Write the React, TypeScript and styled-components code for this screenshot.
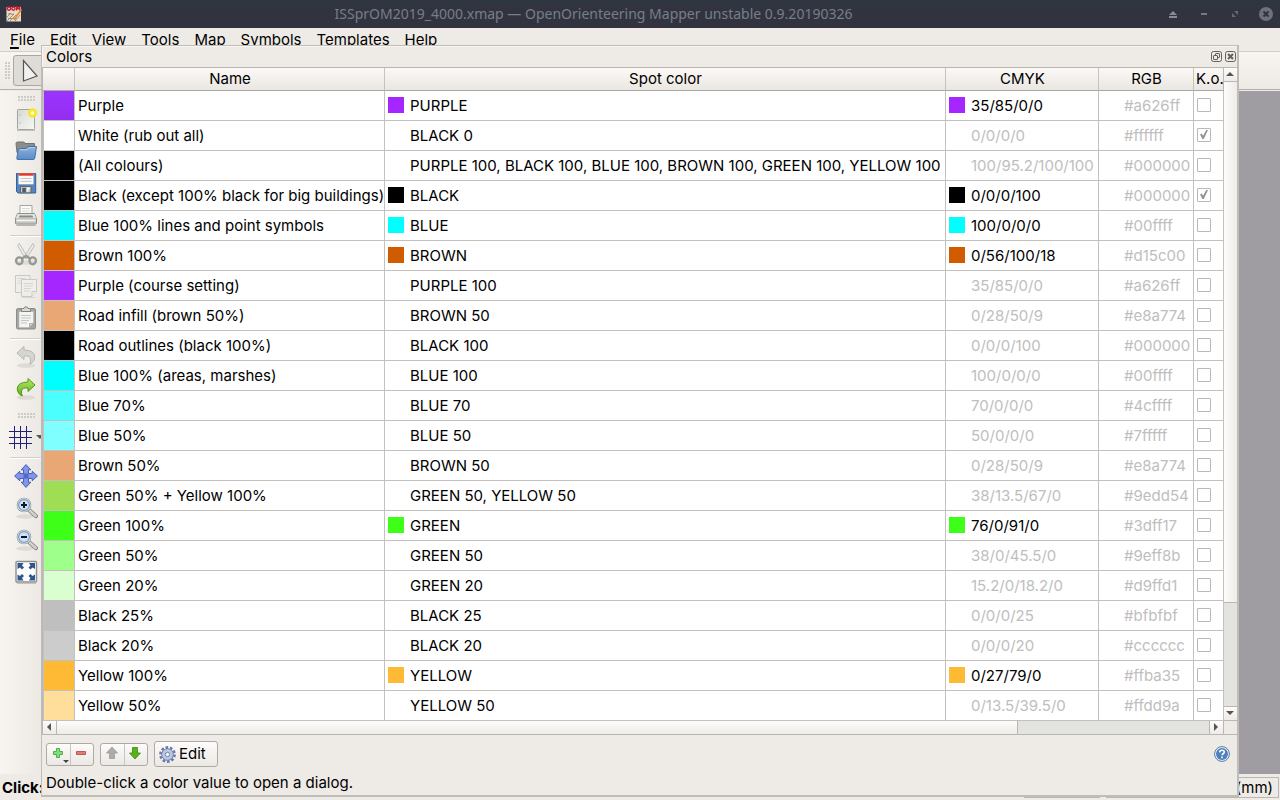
import React from 'react';
import styled, { createGlobalStyle, css } from 'styled-components';

const GlobalStyle = createGlobalStyle`
  * { box-sizing: border-box; }
  body {
    margin: 0;
    font-family: Inter, "Noto Sans", sans-serif;
    font-size: 15px;
    line-height: 20px;
    color: #000;
    background: #efebe7;
  }
  button { font: inherit; color: inherit; border: 0; padding: 0; background: none; }
  svg { display: block; flex: none; }
`;

const line = '#bab6b2';

const Window = styled.div`
  position: relative;
  display: flex;
  flex-direction: column;
  height: 100vh;
  min-height: 400px;
  overflow: hidden;
  background: #eeebe6;
`;

const TitleBar = styled.header`
  display: flex;
  align-items: center;
  flex: none;
  height: 28px;
  padding: 0 6px;
  background: linear-gradient(#2d3641, #31343f 8px);
  color: #777e8a;
  font-family: "Noto Sans", sans-serif;
`;

const WindowTitle = styled.h1`
  flex: 1;
  margin: 0;
  font-size: 14px;
  font-weight: 400;
  line-height: 28px;
  text-align: center;
  white-space: nowrap;
`;

const WindowControls = styled.div`
  display: flex;
  align-items: center;
  gap: 15px;
`;

const WindowButton = styled.button`
  display: grid;
  place-items: center;
  width: 16px;
  height: 16px;
`;

const MenuBar = styled.nav`
  display: flex;
  flex: none;
  gap: 15px;
  height: 24px;
  padding: 2px 10px 0;
  border-bottom: 1px solid #d2cec9;
`;

const MenuItem = styled.button`
  height: 20px;
  white-space: nowrap;
`;

const Mnemonic = styled.span`
  text-decoration: underline 2px;
  text-underline-offset: 2px;
`;

const TopToolbar = styled.div`
  display: flex;
  align-items: center;
  gap: 3px;
  flex: none;
  height: 38px;
  padding: 0 5px;
  border-bottom: 1px solid #b5b0ac;
  background: linear-gradient(#f8f5f1, #edeae5);
`;

const Handle = styled.span<{ $vertical?: boolean }>`
  flex: none;
  width: ${(p) => (p.$vertical ? 5 : 17)}px;
  height: ${(p) => (p.$vertical ? 17 : 5)}px;
  background: radial-gradient(circle at 1px 1px, #cfcbc7 30%, transparent 40%) 0 0 / 3px 3px;
`;

const ToolPressed = styled.button`
  display: grid;
  place-items: center;
  width: 34px;
  height: 31px;
  border: 1px solid #aaa6a2;
  border-radius: 3px;
  background: #dfdbd7;
`;

const Workspace = styled.div`
  display: flex;
  flex: 1;
  min-height: 0;
  padding-top: 1px;
`;

const SideToolbar = styled.div`
  display: flex;
  flex-direction: column;
  flex: none;
  width: 52px;
  padding: 5px 0 0 10px;
  background: linear-gradient(90deg, #f8f5f1, #ece9e4 42px);
`;

const SideHandle = styled.div`
  display: flex;
  justify-content: center;
  flex: none;
  width: 32px;
  height: 7px;
`;

const HandleGap = styled(SideHandle)`
  align-items: center;
  height: 16px;
  padding-top: 5px;
`;

const ToolButton = styled.button`
  display: grid;
  place-items: center;
  flex: none;
  width: 32px;
  height: 32px;
`;

const MenuToolButton = styled.button`
  display: flex;
  align-items: center;
  gap: 4px;
  flex: none;
  width: 42px;
  height: 32px;
  margin-left: -2px;
`;

const ToolSeparator = styled.div`
  flex: none;
  height: 7px;
  border-top: 4px solid transparent;
  &::after { content: ""; display: block; height: 2px; background: linear-gradient(#d2cec9 1px, #fff 1px); }
`;

const MapArea = styled.main`
  flex: 1;
  background: #9f9da2;
`;

const StatusBar = styled.footer`
  display: flex;
  flex: none;
  align-items: center;
  gap: 6px;
  height: 26px;
  padding: 2px 1px 1px 2px;
`;

const StatusHint = styled.strong`
  flex: 1;
  font-weight: 700;
`;

const StatusCell = styled.div<{ $width: number }>`
  width: ${(p) => p.$width}px;
  height: 21px;
  padding-right: 5px;
  border: 1px solid #bab6b2;
  text-align: right;
`;

/* The color list floats over the main window. */
const Dock = styled.section`
  position: absolute;
  inset: 45px 41px 3px 41px;
  display: flex;
  flex-direction: column;
  border: solid #c0bcb7;
  border-width: 1px 2px 2px 1px;
  background: #eeebe6;
`;

const DockTitle = styled.div`
  display: flex;
  align-items: center;
  gap: 3px;
  flex: none;
  height: 21px;
  padding: 0 1px 0 4px;
  box-shadow: inset 1px 1px #f9f7f5;
`;

const DockName = styled.h2`
  flex: 1;
  margin: 0;
  font-size: 15px;
  font-weight: 400;
`;

const Frame = styled.div`
  display: grid;
  grid-template-columns: minmax(0, 1fr) 13px;
  grid-template-rows: minmax(0, 1fr) 13px;
  flex: 1;
  min-height: 0;
  border: solid ${line};
  border-width: 1px 0 1px 1px;
`;

const Viewport = styled.div`
  overflow: hidden;
  background: #fff;
`;

const Table = styled.table`
  width: 100%;
  border-collapse: separate;
  border-spacing: 0;
  table-layout: fixed;
`;

const Col = styled.col<{ $width?: number }>`
  width: ${(p) => (p.$width ? `${p.$width}px` : 'auto')};
`;

const HeadCell = styled.th`
  height: 23px;
  padding: 0 1px 0 2px;
  overflow: hidden;
  border-right: 1px solid #c6c2be;
  border-bottom: 1px solid #aaa6a2;
  background: linear-gradient(#fbf8f5, #eae7e3);
  font-weight: 400;
  white-space: nowrap;
  &:last-child { border-right-color: ${line}; }
`;

const Cell = styled.td<{ $dim?: boolean }>`
  height: 30px;
  padding: 0 0 0 3px;
  border-right: 1px solid #c3c0bd;
  border-bottom: 1px solid #c3c0bd;
  color: ${(p) => (p.$dim ? '#bebebe' : '#000')};
  white-space: nowrap;
`;

const ColorCell = styled(Cell)<{ $color: string; $current?: boolean }>`
  border-left: 1px solid #c3c0bd;
  background: ${(p) => (p.$current ? 'linear-gradient(#9c34ff, #932ef0)' : p.$color)};
`;

const Value = styled.span`
  display: flex;
  align-items: center;
  gap: 6px;
`;

const Swatch = styled.span<{ $color?: string }>`
  flex: none;
  width: 16px;
  height: 16px;
  margin-bottom: 1px;
  background: ${(p) => p.$color ?? 'transparent'};
`;

const Check = styled.input`
  display: block;
  appearance: none;
  width: 14px;
  height: 14px;
  margin: 0 0 1px;
  border: 1px solid #bbb7b2;
  border-radius: 1px;
  background: #fff;
  &:checked::before {
    content: "";
    display: block;
    width: 8px;
    height: 9px;
    margin: 1px 2px;
    background: #969492;
    clip-path: polygon(0 50%, 22% 40%, 38% 65%, 78% 0, 100% 0, 48% 100%, 30% 100%);
  }
`;

const scrollPart = css`
  border: 0 solid ${line};
  background: linear-gradient(#fdfcfb, #eeebe8);
`;

const VScroll = styled.div`
  display: flex;
  flex-direction: column;
  border-bottom: 1px solid ${line};
  background: #e3e3df;
`;

const HScroll = styled.div`
  display: flex;
  border-right: 1px solid ${line};
  background: #e3e3df;
`;

const ScrollArrow = styled.button<{ $edge: string }>`
  ${scrollPart}
  display: grid;
  place-items: center;
  flex: none;
  width: ${(p) => (p.$edge === 'left' || p.$edge === 'right' ? 14 : 13)}px;
  height: ${(p) => (p.$edge === 'left' || p.$edge === 'right' ? 13 : 14)}px;
  padding: 0 2px 1px 0;
  border-${(p) => p.$edge}-width: 1px;
`;

const VThumb = styled.div`
  ${scrollPart}
  height: 521px;
  border-bottom-width: 1px;
  background: linear-gradient(90deg, #fdfcfb, #eeebe8);
`;

const HThumb = styled.div`
  ${scrollPart}
  width: 961px;
  border-right-width: 1px;
`;

const Fill = styled.div`
  flex: 1 1 0;
`;

const Corner = styled.div`
  background: #eeebe6;
`;

const Footer = styled.div`
  flex: none;
  padding: 6px 7px 2px 4px;
`;

const Actions = styled.div`
  display: flex;
  align-items: center;
  gap: 6px;
  height: 26px;
`;

const Group = styled.div`
  display: flex;
  height: 23px;
  border: 1px solid #aeaaa6;
  border-radius: 3px;
  background: linear-gradient(#fdfcfb, #ebe8e4);
`;

const GroupButton = styled.button<{ $disabled?: boolean }>`
  position: relative;
  display: grid;
  place-items: center;
  width: 23px;
  height: 21px;
  padding: 0 2px 2px 0;
  opacity: ${(p) => (p.$disabled ? 0.9 : 1)};
  & + & { border-left: 1px solid #c9c5c1; }
`;

const MenuArrow = styled.svg`
  position: absolute;
  right: 1px;
  bottom: 2px;
`;

const EditButton = styled.button`
  display: flex;
  align-items: center;
  gap: 3px;
  width: 64px;
  height: 26px;
  padding: 0 4px;
  border: 1px solid #aeaaa6;
  border-radius: 3px;
  background: linear-gradient(#fdfcfb, #ebe8e4);
`;

const HelpButton = styled.button`
  margin-left: auto;
`;

const Hint = styled.p`
  margin: 6px 0 0;
`;

/* name, spot color, CMYK, RGB, knockout, own spot color */
type Row = [string, string, string, string, boolean?, boolean?];

const rows: Row[] = [
  ['Purple', 'PURPLE', '35/85/0/0', '#a626ff', false, true],
  ['White (rub out all)', 'BLACK 0', '0/0/0/0', '#ffffff', true],
  ['(All colours)', 'PURPLE 100, BLACK 100, BLUE 100, BROWN 100, GREEN 100, YELLOW 100', '100/95.2/100/100', '#000000'],
  ['Black (except 100% black for big buildings)', 'BLACK', '0/0/0/100', '#000000', true, true],
  ['Blue 100% lines and point symbols', 'BLUE', '100/0/0/0', '#00ffff', false, true],
  ['Brown 100%', 'BROWN', '0/56/100/18', '#d15c00', false, true],
  ['Purple (course setting)', 'PURPLE 100', '35/85/0/0', '#a626ff'],
  ['Road infill (brown 50%)', 'BROWN 50', '0/28/50/9', '#e8a774'],
  ['Road outlines (black 100%)', 'BLACK 100', '0/0/0/100', '#000000'],
  ['Blue 100% (areas, marshes)', 'BLUE 100', '100/0/0/0', '#00ffff'],
  ['Blue 70%', 'BLUE 70', '70/0/0/0', '#4cffff'],
  ['Blue 50%', 'BLUE 50', '50/0/0/0', '#7fffff'],
  ['Brown 50%', 'BROWN 50', '0/28/50/9', '#e8a774'],
  ['Green 50% + Yellow 100%', 'GREEN 50, YELLOW 50', '38/13.5/67/0', '#9edd54'],
  ['Green 100%', 'GREEN', '76/0/91/0', '#3dff17', false, true],
  ['Green 50%', 'GREEN 50', '38/0/45.5/0', '#9eff8b'],
  ['Green 20%', 'GREEN 20', '15.2/0/18.2/0', '#d9ffd1'],
  ['Black 25%', 'BLACK 25', '0/0/0/25', '#bfbfbf'],
  ['Black 20%', 'BLACK 20', '0/0/0/20', '#cccccc'],
  ['Yellow 100%', 'YELLOW', '0/27/79/0', '#ffba35', false, true],
  ['Yellow 50%', 'YELLOW 50', '0/13.5/39.5/0', '#ffdd9a'],
];

const AppIcon = () => (
  <svg width="16" height="16" viewBox="0 0 16 16">
    <rect x="0.5" y="1" width="14.5" height="14.5" fill="#e9dccb" />
    <path d="M1 15L8 8M4 15L10 9M1 11L5 7M9 15l5-6" stroke="#b08a7a" strokeWidth="1" />
    <path d="M2 8c3-1 4 1 6 0M2 13c3-2 4 1 7-1" stroke="#7c8a72" fill="none" />
    <g fill="none" stroke="#c81c38" strokeWidth="1.4">
      <circle cx="3" cy="2.6" r="1.6" /><circle cx="7.4" cy="2.6" r="1.6" />
      <path d="M10.6 4.6V.8l1.5 2 1.6-2v3.8" />
    </g>
    <path d="M15.5 3.5L10.5 10l-1.8 4" stroke="#e98a1d" strokeWidth="1.7" fill="none" />
  </svg>
);

const NewIcon = () => (
  <svg width="24" height="24" viewBox="0 0 24 24">
    <defs>
      <linearGradient id="paper" x2="1" y2="1"><stop stopColor="#d8d8d5" /><stop offset="1" stopColor="#f8f8f7" /></linearGradient>
      <radialGradient id="glow"><stop offset=".2" stopColor="#fffde0" /><stop offset=".4" stopColor="#f6ec2d" /><stop offset=".75" stopColor="#f2e81c" stopOpacity=".9" /><stop offset="1" stopColor="#f4f080" stopOpacity="0" /></radialGradient>
    </defs>
    <rect x="3.5" y="2.500" width="17" height="20" rx=".8" fill="url(#paper)" stroke="#a3a39f" />
    <path d="M3 23.300h18" stroke="#b8b6b1" />
    <path d="M5.500 8h1M5.500 16h1" stroke="#999" />
    <circle cx="18.500" cy="6" r="5.500" fill="url(#glow)" />
  </svg>
);

const OpenIcon = () => (
  <svg width="24" height="24" viewBox="0 0 24 24">
    <defs><linearGradient id="folder" x2="0" y2="1"><stop stopColor="#8eb2dc" /><stop offset="1" stopColor="#5a8bc6" /></linearGradient></defs>
    <path d="M2 4.500q0-1.500 1.500-1.500h6q1.200 0 1.600 1.500h9.400v9H3z" fill="#8b8d8b" stroke="#70726f" />
    <path d="M5 9.500h13" stroke="#dedede" />
    <path d="M5.500 9.500h7l1.500-2h8.500L20.800 19q-.2 1.500-1.500 1.500H3.800q-1.200 0-1-1.200L4.200 11q.2-1.500 1.300-1.500z" fill="url(#folder)" stroke="#4272ad" />
    <path d="M6 10.700h7.200l1.500-2h6.400" stroke="#b9d2ee" fill="none" />
  </svg>
);

const SaveIcon = () => (
  <svg width="24" height="24" viewBox="0 0 24 24">
    <path d="M2.500 2.500h19.200v19.500H4L2.500 20.500z" fill="#5585bf" stroke="#33619b" />
    <path d="M4.500 2.500h15v10.800h-15z" fill="#fafafa" />
    <path d="M4.500 2.200h15v2.500h-15z" fill="#e4372b" />
    <path d="M6.500 7.500h11M6.500 10.300h11" stroke="#c2c2c2" />
    <path d="M6.500 15.500h10.500v6.300H6.500z" fill="#c9cac8" stroke="#555853" strokeWidth=".8" />
    <path d="M8.300 16.800h3.600v4.500H8.300z" fill="#4d5a68" />
    <path d="M13 21.500v-5h3.500z" fill="#f4f4f2" />
  </svg>
);

const PrintIcon = () => (
  <svg width="24" height="24" viewBox="0 0 24 24">
    <path d="M6 2.500h12v9.500H6z" fill="#fafafa" stroke="#a3a5a1" />
    <path d="M8 5.500h8M8 8h8M8 10.300h8" stroke="#dadad6" />
    <path d="M3.500 10.500h17l2 5v4.800q0 .8-.8.8H2.300q-.8 0-.8-.8v-4.800z" fill="#c4c4c0" stroke="#8e908b" />
    <path d="M3.500 11h17l1.500 4H2z" fill="#e3e3df" />
    <path d="M5.500 12.500h13l.7 2H4.800z" fill="#898c86" />
    <path d="M2.500 17.500h19" stroke="#f7f7f5" strokeWidth="1.500" />
    <path d="M2.500 22.500h19" stroke="#b6b4b0" />
  </svg>
);

const CutIcon = () => (
  <svg width="24" height="24" viewBox="0 0 24 24">
    <ellipse cx="12" cy="20.500" rx="10" ry="2.300" fill="#dfdbd6" />
    <path d="M5.200 1.500l8.500 13.700-2.200 1.300L4 4.500q-.5-2 1.200-3z" fill="#ededeb" stroke="#aeafac" strokeWidth=".8" />
    <path d="M18.800 1.500l-8.500 13.700 2.200 1.300L20 4.500q.5-2-1.200-3z" fill="#ededeb" stroke="#aeafac" strokeWidth=".8" />
    <g fill="none" stroke="#979894" strokeWidth="2.400">
      <ellipse cx="5.300" cy="18.800" rx="3.200" ry="3.400" />
      <ellipse cx="18.700" cy="18.800" rx="3.200" ry="3.400" />
      <path d="M8 16.500l4-2.500 4 2.500" />
    </g>
  </svg>
);

const CopyIcon = () => (
  <svg width="24" height="24" viewBox="0 0 24 24">
    <g fill="#f0eeeb" stroke="#c8c8c4">
      <path d="M1.500 1.500h14.500v17H1.500z" />
      <path d="M7.500 5.500h15v12l-4.500 5H7.500z" />
      <path d="M22.500 17.500h-4.500v5" />
    </g>
    <path d="M3.500 4.500h8M3.500 7h3M3.500 9.500h3M10 9.500h9M10 12h9M10 14.500h7M10 17h6" stroke="#d6d5d1" />
    <path d="M8 23.500h14" stroke="#dbd8d4" />
  </svg>
);

const PasteIcon = () => (
  <svg width="24" height="24" viewBox="0 0 24 24">
    <rect x="2.500" y="2.500" width="19" height="20.500" rx="1.500" fill="#a4a5a1" stroke="#8c8d89" />
    <path d="M5 5.500h14.500v12l-4 4H5z" fill="#f4f4f2" stroke="#b7b8b4" strokeWidth=".6" />
    <path d="M7 9.500h10M7 12h10M7 14.500h8M7 17h6" stroke="#c5c5c1" />
    <path d="M19.500 17.500h-4v4z" fill="#d2d2ce" stroke="#9c9d99" strokeWidth=".7" />
    <path d="M7.500 5.500v-2q0-1 1-1H10q0-1.700 2-1.700t2 1.700h1.500q1 0 1 1v2z" fill="#d9d9d5" stroke="#80827d" />
  </svg>
);

const UndoIcon = ({ redo }: { redo?: boolean }) => (
  <svg width="24" height="24" viewBox="0 0 24 24">
    <defs><linearGradient id="redo" x2="0" y2="1"><stop stopColor="#b8ea6c" /><stop offset="1" stopColor="#5dac17" /></linearGradient></defs>
    <ellipse cx="12" cy="20.500" rx="9" ry="2.300" fill="#dedad5" />
    {redo ? (
      <path d="M14 1.500l7 6.500-7 6.500v-3.500q-5.500-.8-6.500 3-.4 2 .8 5-5-2-5-7.600Q3.600 5.300 14 5z" fill="url(#redo)" stroke="#4e9a15" strokeLinejoin="round" />
    ) : (
      <path d="M10 1.500L3 8l7 6.500v-3.500q5.500-.8 6.500 3 .4 2-.8 5 5-2 5-7.600Q20.400 5.300 10 5z" fill="#d5d5d1" stroke="#b6b7b2" strokeLinejoin="round" />
    )}
  </svg>
);

const GridIcon = () => (
  <svg width="24" height="24" viewBox="0 0 24 24">
    <path d="M1 6.500h23M1 12.500h23M1 18.500h23M6.500 1v23M12.500 1v23M18.500 1v23" stroke="#20207a" />
  </svg>
);

const MoveIcon = () => (
  <svg width="24" height="24" viewBox="0 0 24 24">
    <path d="M12 .6l4.800 5.200h-2.300v3.700h3.700V7.200L23.400 12l-5.200 4.800v-2.300h-3.700v3.700h2.300L12 23.400l-4.800-5.200h2.300v-3.700H5.800v2.300L.6 12l5.200-4.800v2.300h3.700V5.800H7.200z" fill="#8095ee" stroke="#42549f" strokeWidth=".9" strokeLinejoin="round" />
    <rect x="9.500" y="9.500" width="5" height="5" fill="#5068c9" />
  </svg>
);

const ZoomIcon = ({ plus }: { plus?: boolean }) => (
  <svg width="24" height="24" viewBox="0 0 24 24">
    <ellipse cx="11" cy="20.500" rx="9" ry="2.200" fill="#dedad5" />
    <path d="M15 14l6.800 6" stroke="#7f817d" strokeWidth="4.200" strokeLinecap="round" />
    <path d="M15 14l6.800 6" stroke="#d3d4d1" strokeWidth="2.400" strokeLinecap="round" />
    <circle cx="10" cy="9" r="7.300" fill="#8b8d89" />
    <circle cx="10" cy="9" r="6.700" fill="#e7e9e8" />
    <circle cx="10" cy="9" r="5.400" fill="#cfe0f4" stroke="#6f99cc" strokeWidth="1.200" />
    <path d={plus ? 'M7 9h6M10 6v6' : 'M7 9h6'} stroke="#101820" strokeWidth="2" />
  </svg>
);

const FitIcon = () => (
  <svg width="24" height="24" viewBox="0 0 24 24">
    <rect x="2" y="1.500" width="20.500" height="20.500" rx="1" fill="#fcfcfb" stroke="#8d8f8b" strokeWidth="1.400" />
    <path d="M3.500 3h6L8 5.500l2 2-2 2-2-2L3.500 9zM21 3h-6l1.500 2.500-2 2 2 2 2-2L21 9zM3.500 20.500h6L8 18l2-2-2-2-2 2-2.500-1.500zM21 20.500h-6l1.500-2.500-2-2 2-2 2 2 2.500-1.500z" fill="#2d5592" />
    <path d="M3 23.300h19" stroke="#bbb8b4" />
  </svg>
);

const Triangle = ({ dir }: { dir: 'up' | 'down' | 'left' | 'right' }) => {
  const d = { up: 'M0 6l4-4 4 4z', down: 'M0 2l4 4 4-4z', left: 'M6 0L2 4l4 4z', right: 'M2 0l4 4-4 4z' }[dir];
  return <svg width="8" height="8" viewBox="0 0 8 8"><path d={d} fill="#575552" /></svg>;
};

const GearIcon = () => (
  <svg width="17" height="17" viewBox="0 0 17 17">
    <circle cx="8.500" cy="8.500" r="7" fill="none" stroke="#6a7cab" strokeWidth="2.800" strokeDasharray="2.600 1.800" />
    <circle cx="8.500" cy="8.500" r="5.800" fill="#bcc7e2" stroke="#7182b0" />
    <circle cx="8.500" cy="8.500" r="2.200" fill="#f4f3f1" stroke="#7182b0" />
  </svg>
);

const HelpIcon = () => (
  <svg width="16" height="16" viewBox="0 0 16 16">
    <circle cx="8" cy="8" r="7.400" fill="#f2f5f9" stroke="#4f78ad" />
    <circle cx="8" cy="8" r="6" fill="#4e80bd" />
    <path d="M5.700 6.400q.1-2.100 2.300-2.100t2.300 1.800q0 1-1.200 1.700-1 .6-1 1.500M8 10.600v1.700" fill="none" stroke="#fff" strokeWidth="1.600" />
  </svg>
);

const FloatIcon = () => (
  <svg width="11" height="11" viewBox="0 0 11 11" fill="none" stroke="#62605d">
    <rect x=".5" y=".5" width="10" height="10" rx="2" />
    <rect x="4.500" y="2.500" width="4" height="4" rx=".5" /><rect x="2.500" y="4.500" width="4" height="4" rx=".5" fill="#eeebe6" />
  </svg>
);

const CloseIcon = () => (
  <svg width="11" height="11" viewBox="0 0 11 11" fill="none" stroke="#62605d">
    <rect x=".5" y=".5" width="10" height="10" rx="2" />
    <path d="M3 3l5 5M8 3L3 8" strokeWidth="2" />
  </svg>
);

const menus = ['Edit', 'View', 'Tools', 'Map', 'Symbols', 'Templates', 'Help'];

export default function App() {
  return (
    <Window>
      <GlobalStyle />
      <TitleBar>
        <AppIcon />
        <WindowTitle>ISSprOM2019_4000.xmap — OpenOrienteering Mapper unstable 0.9.20190326</WindowTitle>
        <WindowControls>
          <WindowButton aria-label="Shade">
            <svg width="8" height="8" viewBox="0 0 8 8" fill="#858b96"><path d="M0 5l4-4 4 4zM0 6h8v2H0z" /></svg>
          </WindowButton>
          <WindowButton aria-label="Minimize">
            <svg width="6" height="6" viewBox="0 0 6 6" fill="#747a86"><path d="M0 2h6v2H0z" /></svg>
          </WindowButton>
          <WindowButton aria-label="Maximize">
            <svg width="6" height="6" viewBox="0 0 6 6" fill="#646a76"><path d="M2 0h4v4zM0 2l4 4H0z" /></svg>
          </WindowButton>
          <WindowButton aria-label="Close window">
            <svg width="14" height="14" viewBox="0 0 14 14"><circle cx="7" cy="7" r="7" fill="#6b717d" /><path d="M4.500 4.500l5 5M9.500 4.500l-5 5" stroke="#31343f" strokeWidth="2" /></svg>
          </WindowButton>
        </WindowControls>
      </TitleBar>
      <MenuBar>
        <MenuItem><Mnemonic>F</Mnemonic>ile</MenuItem>
        {menus.map((m) => <MenuItem key={m}>{m}</MenuItem>)}
      </MenuBar>
      <TopToolbar>
        <Handle $vertical />
        <ToolPressed aria-label="Edit objects">
          <svg width="20" height="24" viewBox="0 0 20 24"><path d="M3.500 1.500v20.500L17 17z" fill="#f2f1ef" stroke="#555" strokeWidth="1.200" /></svg>
        </ToolPressed>
      </TopToolbar>
      <Workspace>
        <SideToolbar>
          <SideHandle><Handle /></SideHandle>
          <ToolButton aria-label="New"><NewIcon /></ToolButton>
          <ToolButton aria-label="Open"><OpenIcon /></ToolButton>
          <ToolButton aria-label="Save"><SaveIcon /></ToolButton>
          <ToolButton aria-label="Print"><PrintIcon /></ToolButton>
          <ToolSeparator />
          <ToolButton aria-label="Cut"><CutIcon /></ToolButton>
          <ToolButton aria-label="Copy"><CopyIcon /></ToolButton>
          <ToolButton aria-label="Paste"><PasteIcon /></ToolButton>
          <ToolSeparator />
          <ToolButton aria-label="Undo"><UndoIcon /></ToolButton>
          <ToolButton aria-label="Redo"><UndoIcon redo /></ToolButton>
          <HandleGap><Handle /></HandleGap>
          <MenuToolButton aria-label="Show grid"><GridIcon /><Triangle dir="down" /></MenuToolButton>
          <ToolSeparator />
          <ToolButton aria-label="Pan"><MoveIcon /></ToolButton>
          <ToolButton aria-label="Zoom in"><ZoomIcon plus /></ToolButton>
          <ToolButton aria-label="Zoom out"><ZoomIcon /></ToolButton>
          <ToolButton aria-label="Show whole map"><FitIcon /></ToolButton>
        </SideToolbar>
        <MapArea />
      </Workspace>
      <StatusBar>
        <StatusHint>Click:</StatusHint>
        <StatusCell $width={76} />
        <StatusCell $width={173}>(mm)</StatusCell>
      </StatusBar>

      <Dock>
        <DockTitle>
          <DockName>Colors</DockName>
          <button aria-label="Float"><FloatIcon /></button>
          <button aria-label="Close"><CloseIcon /></button>
        </DockTitle>
        <Frame>
          <Viewport>
            <Table>
              <colgroup>
                <Col $width={32} /><Col $width={310} /><Col /><Col $width={153} /><Col $width={95} /><Col $width={30} />
              </colgroup>
              <thead>
                <tr>
                  <HeadCell aria-label="Color" />
                  <HeadCell>Name</HeadCell>
                  <HeadCell>Spot color</HeadCell>
                  <HeadCell>CMYK</HeadCell>
                  <HeadCell>RGB</HeadCell>
                  <HeadCell>K.o.</HeadCell>
                </tr>
              </thead>
              <tbody>
                {rows.map(([name, spot, cmyk, rgb, knockout, own], i) => (
                  <tr key={name}>
                    <ColorCell $color={rgb} $current={i === 0} />
                    <Cell>{name}</Cell>
                    <Cell><Value><Swatch $color={own ? rgb : undefined} />{spot}</Value></Cell>
                    <Cell $dim={!own}><Value><Swatch $color={own ? rgb : undefined} />{cmyk}</Value></Cell>
                    <Cell $dim><Value><Swatch />{rgb}</Value></Cell>
                    <Cell><Check type="checkbox" aria-label={`Knockout: ${name}`} defaultChecked={knockout} /></Cell>
                  </tr>
                ))}
              </tbody>
            </Table>
          </Viewport>
          <VScroll>
            <ScrollArrow $edge="bottom" aria-label="Scroll up"><Triangle dir="up" /></ScrollArrow>
            <VThumb />
            <Fill />
            <ScrollArrow $edge="top" aria-label="Scroll down"><Triangle dir="down" /></ScrollArrow>
          </VScroll>
          <HScroll>
            <ScrollArrow $edge="right" aria-label="Scroll left"><Triangle dir="left" /></ScrollArrow>
            <HThumb />
            <Fill />
            <ScrollArrow $edge="left" aria-label="Scroll right"><Triangle dir="right" /></ScrollArrow>
          </HScroll>
          <Corner />
        </Frame>
        <Footer>
          <Actions>
            <Group>
              <GroupButton aria-label="Add color">
                <svg width="12" height="12" viewBox="0 0 12 12"><path d="M4.500 1.500h3v3h3v3h-3v3h-3v-3h-3v-3h3z" fill="#84dc7e" stroke="#4cb04a" /></svg>
                <MenuArrow width="6" height="3" viewBox="0 0 6 3"><path d="M0 0h6L3 3z" fill="#444" /></MenuArrow>
              </GroupButton>
              <GroupButton aria-label="Remove color">
                <svg width="12" height="12" viewBox="0 0 12 12"><path d="M1.500 4.500h9v3h-9z" fill="#dc8074" stroke="#c0594f" /></svg>
              </GroupButton>
            </Group>
            <Group>
              <GroupButton $disabled aria-label="Move up">
                <svg width="14" height="14" viewBox="0 0 14 14"><path d="M7 1l5.500 6H9.500v5.500h-5V7H1.500z" fill="#a5a5a2" stroke="#91918e" strokeWidth=".8" /></svg>
              </GroupButton>
              <GroupButton aria-label="Move down">
                <svg width="14" height="14" viewBox="0 0 14 14"><path d="M7 13l5.500-6H9.500V1.500h-5V7H1.500z" fill="#58b31b" stroke="#3c8a0b" strokeWidth=".8" /></svg>
              </GroupButton>
            </Group>
            <EditButton><GearIcon />Edit</EditButton>
            <HelpButton aria-label="Help"><HelpIcon /></HelpButton>
          </Actions>
          <Hint>Double-click a color value to open a dialog.</Hint>
        </Footer>
      </Dock>
    </Window>
  );
}
